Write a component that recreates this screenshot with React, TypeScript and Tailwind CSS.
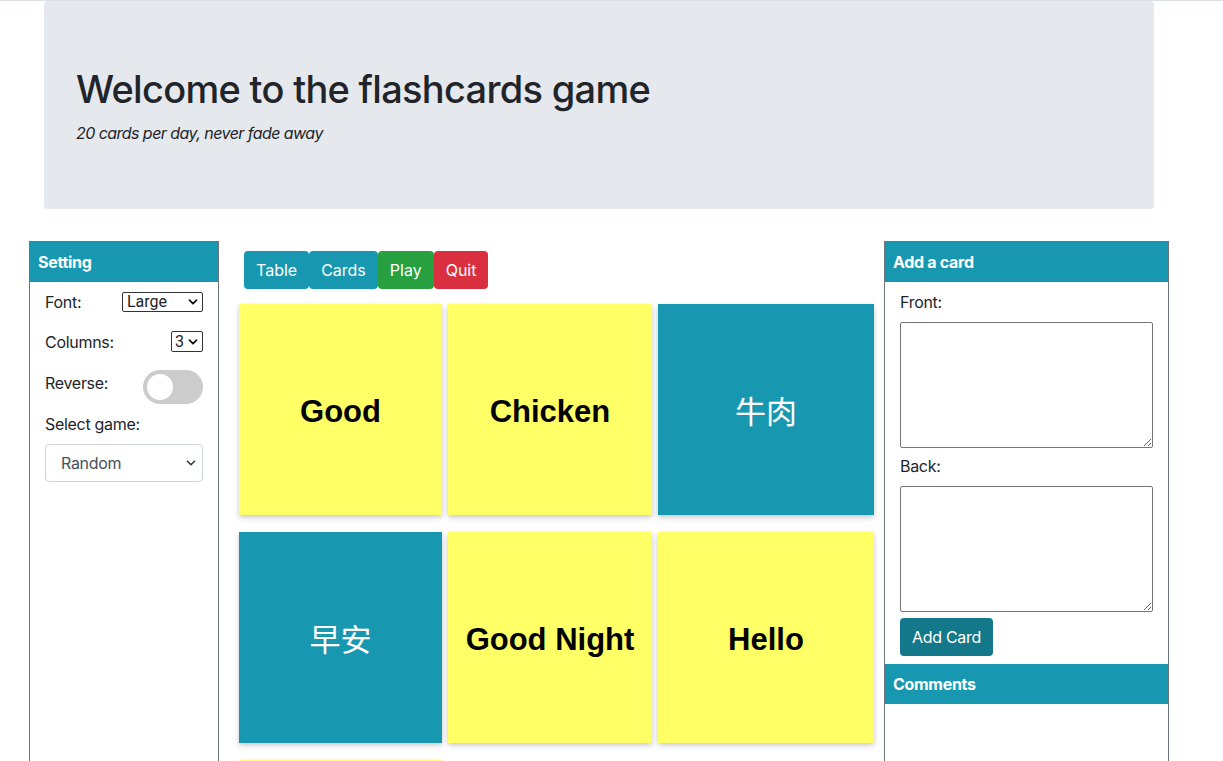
import React from "react";

const teal = "bg-[#1898b0]";

function Chevron() {
  return (
    <svg width="10" height="10" viewBox="0 0 10 10" className="pointer-events-none absolute right-[4px] top-1/2 -translate-y-1/2">
      <path d="M1.5 3.2 L5 6.7 L8.5 3.2" fill="none" stroke="#111" strokeWidth="1.8" strokeLinecap="round" strokeLinejoin="round" />
    </svg>
  );
}

function Card({ text, color, cjk }: { text: string; color: "y" | "t"; cjk?: boolean }) {
  return (
    <div
      className={
        "h-[211px] flex items-center justify-center shadow-[0_3px_6px_rgba(0,0,0,0.16),0_1px_3px_rgba(0,0,0,0.08)] " +
        (color === "y" ? "bg-[#ffff66] text-black" : "bg-[#1898b0] text-white")
      }
    >
      {cjk ? (
        <span className="text-[31px] font-normal tracking-normal [font-family:'Noto_Sans_CJK_SC','Noto_Sans',sans-serif]">{text}</span>
      ) : (
        <span className="pt-[4px] text-[31px] font-bold tracking-normal [font-family:'Liberation_Sans',Arial,sans-serif]">{text}</span>
      )}
    </div>
  );
}

export default function App() {
  return (
    <div className="min-h-[900px] bg-white border-t border-[#dcdfe4] text-[#212529] [font-family:Inter,'Noto_Sans',sans-serif] text-[16px] leading-[24px] tracking-[-0.3px]">
      <div className="ml-[44px] w-[1110px] h-[208px] bg-[#e5e8ed] rounded-[4px] px-[32px] pt-[64px]">
        <h1 className="text-[38px] leading-[48px] font-medium mb-[8px] tracking-[-0.7px]">Welcome to the flashcards game</h1>
        <p className="italic tracking-[-0.55px]">20 cards per day, never fade away</p>
      </div>

      <div className="ml-[29px] w-[1140px] mt-[32px] flex items-start">
        {/* Left panel */}
        <div className="w-[190px] h-[700px] border border-[#6c757d]">
          <div className={`${teal} h-[40px] flex items-center px-[8px] text-white font-bold`}>Setting</div>
          <div className="px-[15px]">
            <div className="mt-[10px] h-[20px] flex items-center justify-between">
              <span>Font:</span>
              <div className="relative w-[81px] h-[20px] border border-[#333] rounded-[2px] flex items-center pl-[4px] text-[16px] leading-[18px] tracking-normal [font-family:Roboto,'Liberation_Sans',sans-serif]">
                Large
                <Chevron />
              </div>
            </div>
            <div className="mt-[19px] h-[21px] flex items-center justify-between">
              <span>Columns:</span>
              <div className="relative w-[32px] h-[21px] border border-[#333] rounded-[2px] flex items-center pl-[3px] text-[16px] leading-[18px] tracking-normal [font-family:Roboto,'Liberation_Sans',sans-serif]">
                3
                <Chevron />
              </div>
            </div>
            <div className="mt-[18px] h-[34px] flex items-start justify-between">
              <span className="pt-[1px]">Reverse:</span>
              <div className="w-[60px] h-[34px] rounded-full bg-[#cccccc] p-[4px]">
                <div className="w-[26px] h-[26px] rounded-full bg-white" />
              </div>
            </div>
            <div className="mt-[8px]">Select game:</div>
            <div className="relative mt-[8px] h-[38px] border border-[#ced4da] rounded-[4px] flex items-center pl-[15px] text-[#495057]">
              Random
              <svg width="10" height="10" viewBox="0 0 10 10" className="absolute right-[6px] top-1/2 -translate-y-1/2">
                <path d="M1.5 3.2 L5 6.7 L8.5 3.2" fill="none" stroke="#343a40" strokeWidth="1.6" strokeLinecap="round" strokeLinejoin="round" />
              </svg>
            </div>
          </div>
        </div>

        {/* Middle */}
        <div className="w-[665px] pl-[20px] pr-[10px] pt-[10px]">
          <div className="flex pl-[5px] text-white tracking-normal">
            <button className={`${teal} h-[38px] px-[12px] rounded-[4px]`}>Table</button>
            <button className={`${teal} h-[38px] px-[12px] rounded-[4px]`}>Cards</button>
            <button className="bg-[#28a040] h-[38px] px-[12px] rounded-[4px]">Play</button>
            <button className="bg-[#da2f3f] h-[38px] px-[12px] rounded-[4px]">Quit</button>
          </div>
          <div className="mt-[15px] grid grid-cols-[203px_204px_216px] gap-x-[6px] gap-y-[17px]">
            <Card text="Good" color="y" />
            <Card text="Chicken" color="y" />
            <Card text="牛肉" color="t" cjk />
            <Card text="早安" color="t" cjk />
            <Card text="Good Night" color="y" />
            <Card text="Hello" color="y" />
            <Card text="Thank you" color="y" />
          </div>
        </div>

        {/* Right panel */}
        <div className="w-[285px] h-[700px] border border-[#6c757d]">
          <div className={`${teal} h-[40px] flex items-center px-[8px] text-white font-bold`}>Add a card</div>
          <div className="px-[15px]">
            <div className="mt-[8px]">Front:</div>
            <textarea className="mt-[8px] block w-[253px] h-[126px] border border-[#767676] rounded-[2px]" />
            <div className="mt-[6px]">Back:</div>
            <textarea className="mt-[8px] block w-[253px] h-[126px] border border-[#767676] rounded-[2px]" />
            <button className="mt-[6px] h-[38px] px-[12px] rounded-[4px] bg-[#137889] text-white">Add Card</button>
          </div>
          <div className={`${teal} mt-[8px] h-[40px] flex items-center px-[8px] text-white font-bold`}>Comments</div>
        </div>
      </div>
    </div>
  );
}
